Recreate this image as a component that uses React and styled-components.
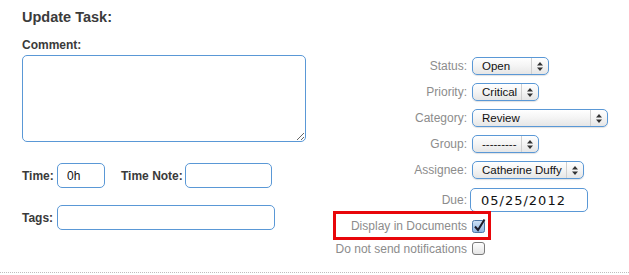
import React from 'react';
import styled, { createGlobalStyle } from 'styled-components';

const Global = createGlobalStyle`
  body {
    margin: 0;
    background: #fff;
    font-family: "Liberation Sans", Arial, sans-serif;
  }
`;

const Page = styled.div`
  width: 629px;
  padding: 9px 0 17px 22px;
  box-sizing: border-box;
  border-bottom: 1px dotted #bdbdbd;
`;

const Heading = styled.h2`
  margin: 0;
  font-size: 14.5px;
  line-height: 16px;
  font-weight: bold;
  color: #3b3b3b;
`;

const Columns = styled.div`
  display: flex;
  margin-top: 13px;
`;

const Left = styled.div`
  width: 284px;
  display: flex;
  flex-direction: column;
`;

const BoldLabel = styled.label`
  font-size: 12px;
  line-height: 14px;
  font-weight: bold;
  color: #3a3a3a;
  width: ${(p) => (p.$w ? `${p.$w}px` : 'auto')};
  margin-left: ${(p) => p.$ml || 0}px;
  flex-shrink: 0;
`;

const TextArea = styled.textarea`
  display: block;
  margin-top: 3px;
  width: 284px;
  height: 87px;
  box-sizing: border-box;
  border: 1px solid #5a98d6;
  border-radius: 5px;
  resize: both;
  outline: none;
`;

const InlineRow = styled.div`
  display: flex;
  align-items: center;
  margin-top: ${(p) => p.$mt}px;
`;

const TextInput = styled.input`
  width: ${(p) => p.$w}px;
  height: 25px;
  box-sizing: border-box;
  border: 1px solid #5a98d6;
  border-radius: 5px;
  padding: 0 0 0 9px;
  font-family: "Liberation Sans", Arial, sans-serif;
  font-size: 12px;
  color: #111;
  outline: none;
  background: #fff;
`;

const Right = styled.div`
  margin-left: 27px;
  padding-top: 19px;
  display: flex;
  flex-direction: column;
  align-items: flex-start;
`;

const FieldRow = styled.div`
  display: flex;
  align-items: center;
  height: ${(p) => p.$h}px;
  margin-top: ${(p) => p.$mt || 0}px;
`;

const Highlight = styled(FieldRow)`
  margin-left: 3px;
  padding-right: 2px;
  outline: 3px solid #e8060a;
`;

const GrayLabel = styled.span`
  width: ${(p) => p.$w || 134}px;
  text-align: right;
  font-size: 12px;
  color: #8c8c8c;
  padding-right: 5px;
  white-space: nowrap;
  flex-shrink: 0;
`;

const SelectBox = styled.div`
  display: flex;
  align-items: stretch;
  width: ${(p) => p.$w}px;
  height: 18px;
  box-sizing: border-box;
  border: 1px solid #5a98d6;
  border-radius: 5px;
  background: linear-gradient(#ffffff, #f4f4f4 50%, #e6e6e6);
  box-shadow: 0 1px 1px rgba(0, 0, 0, 0.12);
  font-size: 11.5px;
  color: #111;
`;

const SelectValue = styled.span`
  flex: 1;
  padding-left: 9px;
  line-height: 16px;
  white-space: nowrap;
  overflow: hidden;
`;

const SelectArrows = styled.span`
  width: 16px;
  border-left: 1px solid #cfcfcf;
  display: flex;
  align-items: center;
  justify-content: center;
`;

const DueInput = styled(TextInput)`
  height: 24px;
  font-family: "DejaVu Sans", sans-serif;
  font-size: 13px;
  letter-spacing: 1px;
  padding-left: 10px;
  margin-left: -2px;
`;

const Arrows = () => (
  <svg width="6" height="9" viewBox="0 0 6 9">
    <path d="M3 0 L6 3.5 H0 Z M0 5.5 H6 L3 9 Z" fill="#333" />
  </svg>
);

const Select = ({ w, value }) => (
  <SelectBox $w={w}>
    <SelectValue>{value}</SelectValue>
    <SelectArrows>
      <Arrows />
    </SelectArrows>
  </SelectBox>
);

const Checkbox = ({ checked }) =>
  checked ? (
    <svg width="14" height="14" viewBox="0 0 14 14">
      <defs>
        <linearGradient id="cb" x1="0" y1="0" x2="0" y2="1">
          <stop offset="0" stopColor="#cfe2f6" />
          <stop offset="1" stopColor="#8fb6e2" />
        </linearGradient>
      </defs>
      <rect x="0.5" y="1.5" width="12" height="12" rx="2" fill="url(#cb)" stroke="#4f79a8" />
      <path d="M3 7.5 L6 11 L12.5 0.5" fill="none" stroke="#1d1d2a" strokeWidth="2" />
    </svg>
  ) : (
    <svg width="14" height="14" viewBox="0 0 14 14">
      <defs>
        <linearGradient id="cu" x1="0" y1="0" x2="0" y2="1">
          <stop offset="0" stopColor="#ffffff" />
          <stop offset="1" stopColor="#e4e4e4" />
        </linearGradient>
      </defs>
      <rect x="0.5" y="0.5" width="12" height="12" rx="2.5" fill="url(#cu)" stroke="#7a7a7a" />
    </svg>
  );

const App = () => {
  return (
    <Page>
      <Global />
      <Heading>Update Task:</Heading>
      <Columns>
        <Left>
          <BoldLabel>Comment:</BoldLabel>
          <TextArea />
          <InlineRow $mt={21}>
            <BoldLabel $w={35}>Time:</BoldLabel>
            <TextInput $w={48} defaultValue="0h" />
            <BoldLabel $w={64} $ml={16}>
              Time Note:
            </BoldLabel>
            <TextInput $w={87} />
          </InlineRow>
          <InlineRow $mt={17}>
            <BoldLabel $w={35}>Tags:</BoldLabel>
            <TextInput $w={218} />
          </InlineRow>
        </Left>
        <Right>
          <FieldRow $h={18}>
            <GrayLabel>Status:</GrayLabel>
            <Select w={77} value="Open" />
          </FieldRow>
          <FieldRow $h={18} $mt={8}>
            <GrayLabel>Priority:</GrayLabel>
            <Select w={67} value="Critical" />
          </FieldRow>
          <FieldRow $h={18} $mt={8}>
            <GrayLabel>Category:</GrayLabel>
            <Select w={136} value="Review" />
          </FieldRow>
          <FieldRow $h={18} $mt={8}>
            <GrayLabel>Group:</GrayLabel>
            <Select w={67} value="---------" />
          </FieldRow>
          <FieldRow $h={18} $mt={8}>
            <GrayLabel>Assignee:</GrayLabel>
            <Select w={112} value="Catherine Duffy" />
          </FieldRow>
          <FieldRow $h={24} $mt={9}>
            <GrayLabel>Due:</GrayLabel>
            <DueInput $w={118} defaultValue="05/25/2012" />
          </FieldRow>
          <Highlight $h={23} $mt={2}>
            <GrayLabel $w={131}>Display in Documents</GrayLabel>
            <Checkbox checked />
          </Highlight>
          <FieldRow $h={13} $mt={5}>
            <GrayLabel>Do not send notifications</GrayLabel>
            <Checkbox />
          </FieldRow>
        </Right>
      </Columns>
    </Page>
  );
};

export default App;
